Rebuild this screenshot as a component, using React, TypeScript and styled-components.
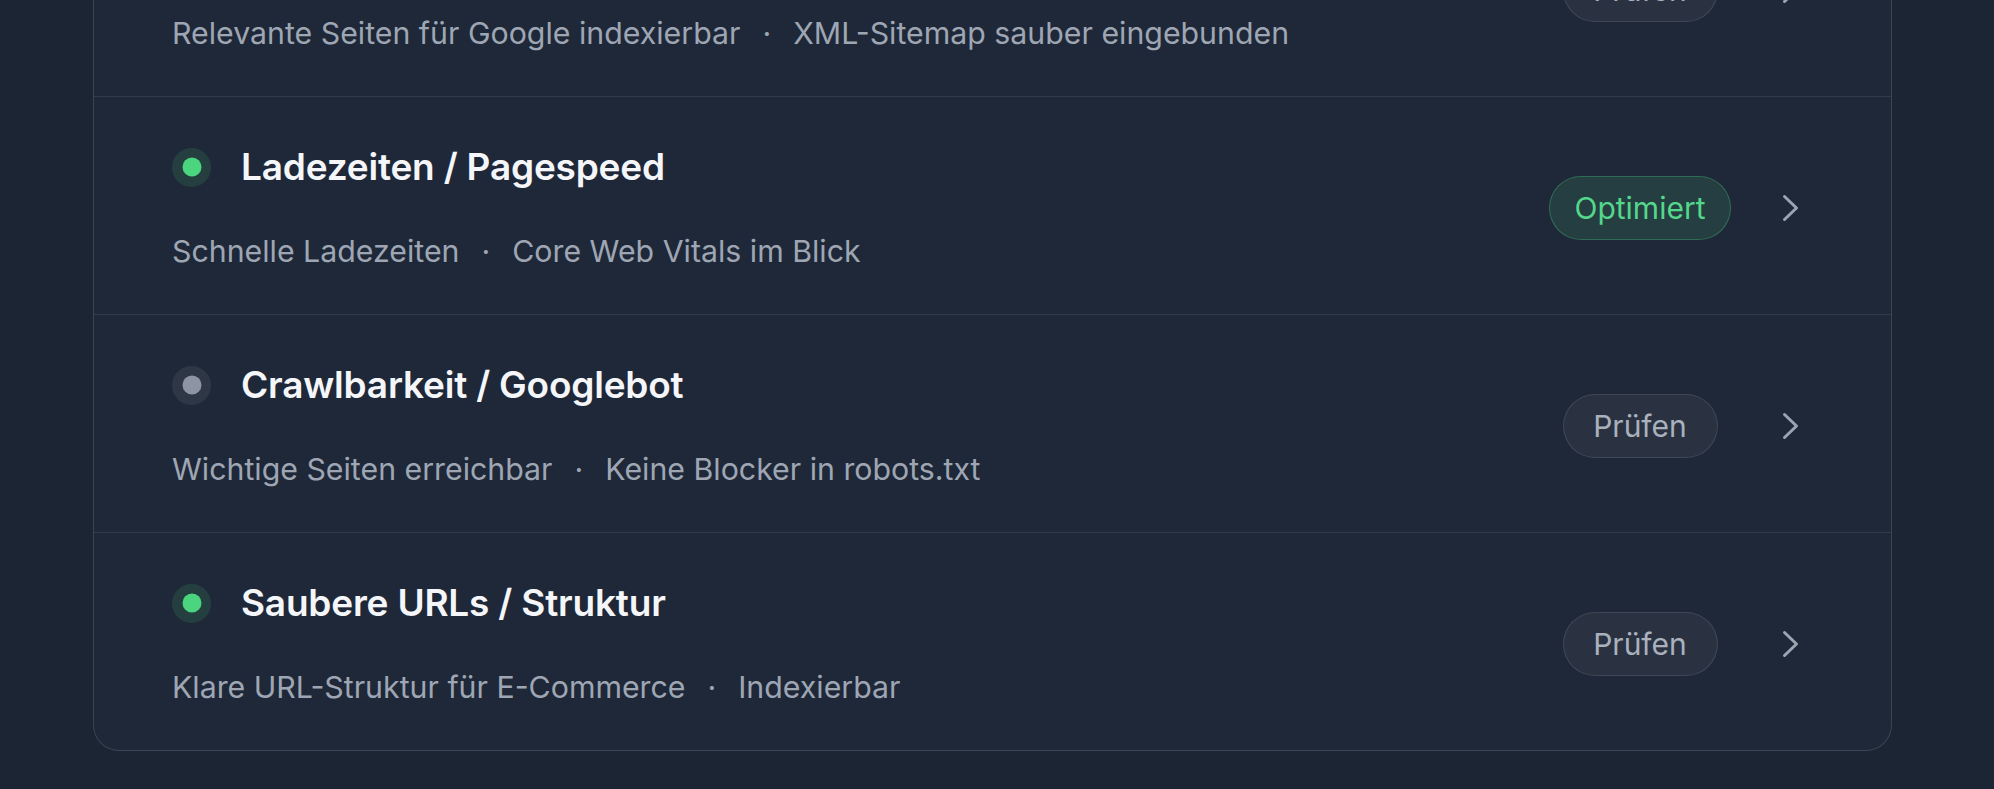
import React from "react";
import styled, { createGlobalStyle } from "styled-components";

const GlobalStyle = createGlobalStyle`
  html, body {
    margin: 0;
    padding: 0;
    background: #1c2534;
    overflow: hidden;
  }
  body {
    font-family: Inter, "Noto Sans", "Liberation Sans", sans-serif;
    -webkit-font-smoothing: antialiased;
  }
`;

const Page = styled.div`
  margin-top: -128px;
  padding: 0 102px 38px 93px;
`;

const Card = styled.section`
  background: #1f2838;
  border: 1px solid rgba(255, 255, 255, 0.13);
  border-radius: 26px;
  overflow: hidden;
`;

const Row = styled.div`
  display: flex;
  align-items: center;
  padding: 50px 80px 45px 78px;
  &:first-child {
    padding-top: 56px;
  }
  & + & {
    border-top: 1px solid rgba(255, 255, 255, 0.09);
  }
`;

const Info = styled.div`
  flex: 1;
  display: flex;
  flex-direction: column;
  gap: 46px;
  min-width: 0;
`;

const TitleLine = styled.div`
  display: flex;
  align-items: center;
  gap: 30px;
  height: 40px;
`;

const Dot = styled.span<{ $tone: "green" | "gray" }>`
  position: relative;
  flex: none;
  width: 39px;
  height: 39px;
  border-radius: 50%;
  background: ${(p) =>
    p.$tone === "green" ? "rgba(74, 222, 128, 0.13)" : "rgba(255, 255, 255, 0.07)"};
  &::after {
    content: "";
    position: absolute;
    left: 50%;
    top: 50%;
    width: 19px;
    height: 19px;
    border-radius: 50%;
    transform: translate(-50%, -50%);
    background: ${(p) => (p.$tone === "green" ? "#4ad57e" : "#8d95a4")};
  }
`;

const Title = styled.h3`
  margin: 0;
  font-size: 37px;
  font-weight: 600;
  line-height: 40px;
  color: #f4f6f9;
  letter-spacing: -0.2px;
  white-space: nowrap;
`;

const Subtitle = styled.p`
  margin: 0;
  height: 36px;
  font-size: 30.3px;
  line-height: 36px;
  font-weight: 400;
  color: #9ea6b3;
  white-space: nowrap;
`;

const Sep = styled.span`
  display: inline-block;
  margin: 0 22px;
  color: #9ea6b3;
`;

const BadgeSlot = styled.div`
  flex: none;
  width: 204px;
  display: flex;
  justify-content: center;
  margin-right: 29px;
`;

const Badge = styled.span<{ $variant: "ok" | "check" }>`
  display: inline-flex;
  align-items: center;
  justify-content: center;
  box-sizing: border-box;
  height: 64px;
  min-width: 155px;
  padding: 0 24px;
  border-radius: 32px;
  font-size: 30px;
  font-weight: 400;
  white-space: nowrap;
  border: 1.5px solid
    ${(p) => (p.$variant === "ok" ? "rgba(74, 222, 128, 0.3)" : "rgba(255, 255, 255, 0.1)")};
  background: ${(p) =>
    p.$variant === "ok" ? "rgba(74, 222, 128, 0.12)" : "rgba(255, 255, 255, 0.05)"};
  color: ${(p) => (p.$variant === "ok" ? "#55d78b" : "#a9b1bd")};
`;

const ChevronBox = styled.span`
  flex: none;
  width: 40px;
  height: 40px;
  display: flex;
  align-items: center;
  justify-content: center;
`;

const Chevron = () => (
  <svg width="40" height="40" viewBox="0 0 40 40" fill="none">
    <polyline
      points="13.5,8.5 25.5,20 13.5,31.5"
      stroke="#9ca4b2"
      strokeWidth="3"
      strokeLinecap="round"
      strokeLinejoin="round"
    />
  </svg>
);

type Item = {
  title: string;
  tone: "green" | "gray";
  parts: [string, string];
  status: "ok" | "check";
};

const items: Item[] = [
  {
    title: "Indexierung / Sitemap",
    tone: "gray",
    parts: ["Relevante Seiten für Google indexierbar", "XML-Sitemap sauber eingebunden"],
    status: "check",
  },
  {
    title: "Ladezeiten / Pagespeed",
    tone: "green",
    parts: ["Schnelle Ladezeiten", "Core Web Vitals im Blick"],
    status: "ok",
  },
  {
    title: "Crawlbarkeit / Googlebot",
    tone: "gray",
    parts: ["Wichtige Seiten erreichbar", "Keine Blocker in robots.txt"],
    status: "check",
  },
  {
    title: "Saubere URLs / Struktur",
    tone: "green",
    parts: ["Klare URL-Struktur für E-Commerce", "Indexierbar"],
    status: "check",
  },
];

export default function App() {
  return (
    <>
      <GlobalStyle />
      <Page>
        <Card>
          {items.map((it) => (
            <Row key={it.title}>
              <Info>
                <TitleLine>
                  <Dot $tone={it.tone} />
                  <Title>{it.title}</Title>
                </TitleLine>
                <Subtitle>
                  {it.parts[0]}
                  <Sep>·</Sep>
                  {it.parts[1]}
                </Subtitle>
              </Info>
              <BadgeSlot>
                <Badge $variant={it.status}>{it.status === "ok" ? "Optimiert" : "Prüfen"}</Badge>
              </BadgeSlot>
              <ChevronBox>
                <Chevron />
              </ChevronBox>
            </Row>
          ))}
        </Card>
      </Page>
    </>
  );
}
